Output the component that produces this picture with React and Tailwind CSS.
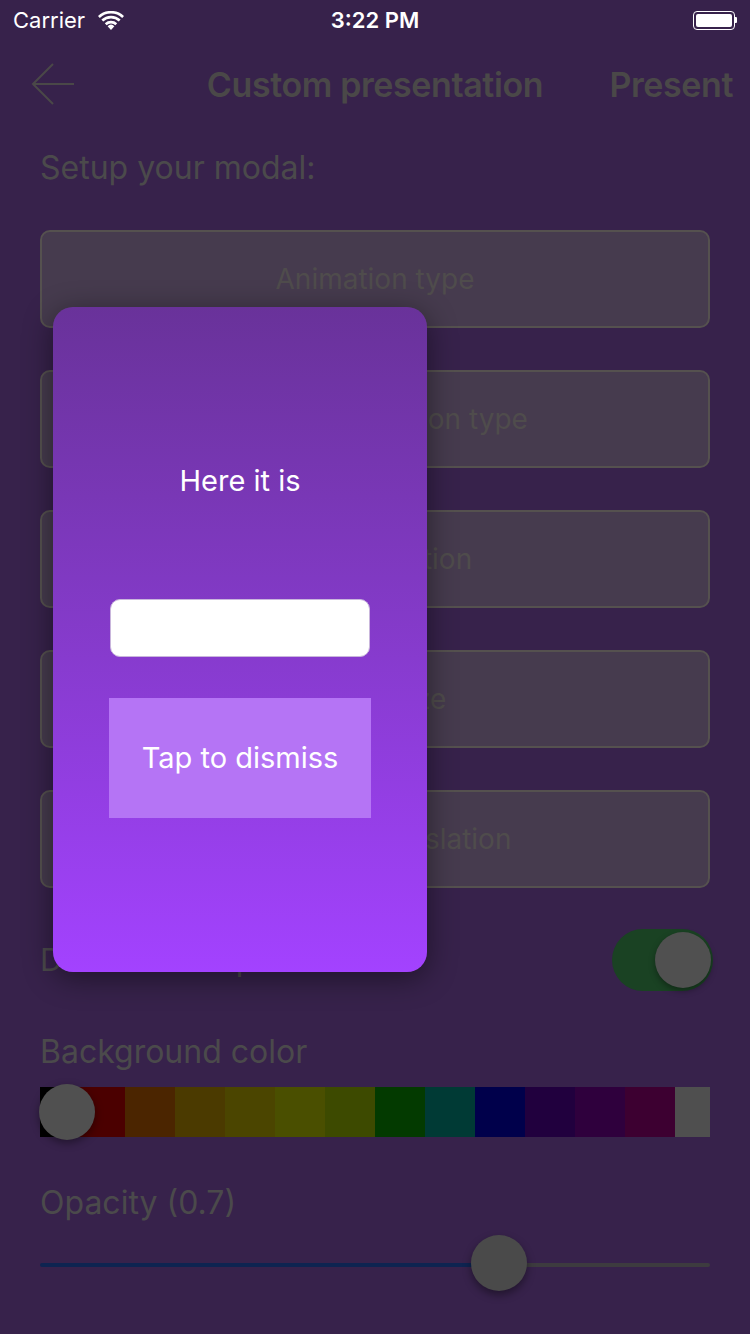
const swatches = [
  '#000000',
  '#4b0000',
  '#4b2500',
  '#4b3a00',
  '#4b4500',
  '#4a4f00',
  '#3d4a00',
  '#033a00',
  '#003a35',
  '#00004b',
  '#21003e',
  '#2f003d',
  '#3d0031',
]

const options = [
  'Animation type',
  'Dismiss animation type',
  'Modal position',
  'Modal size',
  'Keyboard translation',
]

function StatusBar() {
  return (
    <div className="grid h-10 grid-cols-3 items-center px-[13px] text-[22px] text-white">
      <div className="flex items-center gap-[13px]">
        <span>Carrier</span>
        <svg width="26" height="19" viewBox="0 0 26 19" fill="white">
          <path d="M13 19 L9.6 15.2 A5 5 0 0 1 16.4 15.2 Z" />
          <path d="M6.8 12.2 A9 9 0 0 1 19.2 12.2 L17.4 14.2 A6.4 6.4 0 0 0 8.6 14.2 Z" />
          <path d="M3.4 8.6 A14 14 0 0 1 22.6 8.6 L20.8 10.6 A11.4 11.4 0 0 0 5.2 10.6 Z" />
          <path d="M0 5 A19 19 0 0 1 26 5 L24.2 7 A16.4 16.4 0 0 0 1.8 7 Z" />
        </svg>
      </div>
      <div className="text-center font-semibold">3:22 PM</div>
      <div className="flex justify-end">
        <div className="flex items-center">
          <div className="h-[19px] w-[42px] rounded-[4px] border-[1.5px] border-white p-[2px]">
            <div className="h-full w-full rounded-[2px] bg-white" />
          </div>
          <div className="h-[6px] w-[2px] rounded-r-[1px] bg-white" />
        </div>
      </div>
    </div>
  )
}

function NavBar() {
  return (
    <div className="grid h-[88px] grid-cols-[1fr_auto_1fr] items-center">
      <div className="pl-[31px]">
        <svg width="44" height="44" viewBox="0 0 44 44" fill="none" stroke="#4a4848" strokeWidth="2">
          <path d="M43 22 H2 M22 2 L2 22 L22 42" />
        </svg>
      </div>
      <div className="text-[34px] font-semibold tracking-[-0.4px] text-[#4a4848]">Custom presentation</div>
      <div className="pr-[17px] text-right text-[34px] font-semibold tracking-[-0.4px] text-[#4a4848]">Present</div>
    </div>
  )
}

function Toggle() {
  return (
    <div className="-mr-[3px] flex h-[62px] w-[101px] items-center justify-end rounded-full bg-[#1a4223] pr-[2px]">
      <div className="h-14 w-14 rounded-full bg-[#505050] shadow-[0_3px_6px_rgba(0,0,0,0.35)]" />
    </div>
  )
}

function Modal() {
  return (
    <div className="absolute left-[53px] top-[307px] flex h-[665px] w-[374px] flex-col items-center rounded-[20px] bg-gradient-to-b from-[#69329a] to-[#a342ff] shadow-[0_6px_30px_rgba(0,0,0,0.45)]">
      <p className="mt-[152px] text-[29px] text-white">Here it is</p>
      <div className="mt-[96px] h-[58px] w-[260px] rounded-[10px] border border-[#c9b6dc] bg-white" />
      <button
        type="button"
        className="mt-[41px] flex h-[120px] w-[262px] items-center justify-center bg-[#b574f5] text-[29px] text-white"
      >
        Tap to dismiss
      </button>
    </div>
  )
}

export default function App() {
  return (
    <div className="relative h-[1334px] w-[750px] overflow-hidden bg-[#37224b] font-['Inter','Noto_Sans',sans-serif]">
      <StatusBar />
      <NavBar />

      <main className="px-10">
        <p className="mt-5 h-10 text-[32px] leading-10 text-[#4b4a4b]">Setup your modal:</p>

        <div className="mt-[42px] flex flex-col gap-[42px]">
          {options.map((label) => (
            <div
              key={label}
              className="flex h-[98px] items-center justify-center rounded-[10px] border-2 border-[#55514f] bg-[#463b4e] text-[28px] text-[#4f4c4c]"
            >
              {label}
            </div>
          ))}
        </div>

        <div className="mt-[41px] flex items-center justify-between">
          <span className="text-[31px] text-[#4b4a4b]">Dismiss on tap</span>
          <Toggle />
        </div>

        <p className="mt-[41px] h-10 text-[32px] leading-10 text-[#4b4a4b]">Background color</p>

        <div className="relative mt-[15px] flex h-[50px]">
          <div className="h-full w-[35px] bg-[#000000]" />
          {swatches.slice(1).map((color) => (
            <div key={color} className="h-full w-[50px]" style={{ backgroundColor: color }} />
          ))}
          <div className="h-full flex-1 bg-[#4f4f4f]" />
          <div className="absolute left-[-1px] top-[-3px] h-14 w-14 rounded-full bg-[#505050] shadow-[0_3px_8px_rgba(0,0,0,0.4)]" />
        </div>

        <p className="mt-[46px] h-10 text-[32px] leading-10 text-[#4b4a4b]">Opacity (0.7)</p>

        <div className="relative mt-[14px] flex h-14 items-center">
          <div className="h-[4px] w-[459px] rounded-l-full bg-[#0e2451]" />
          <div className="h-[4px] flex-1 rounded-r-full bg-[#3d3b3f]" />
          <div className="absolute left-[431px] top-[-2px] h-14 w-14 rounded-full bg-[#4a4a4a] shadow-[0_4px_8px_rgba(0,0,0,0.4)]" />
        </div>
      </main>

      <Modal />
    </div>
  )
}
